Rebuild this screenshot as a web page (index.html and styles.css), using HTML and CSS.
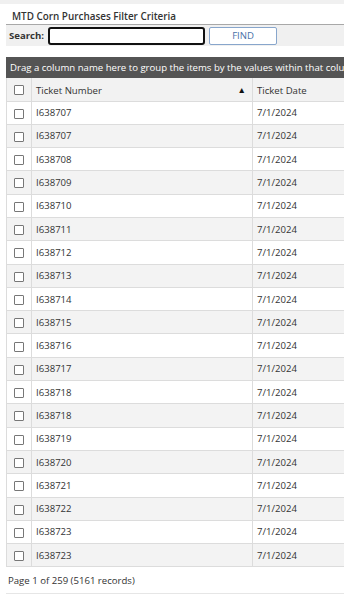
FILE: index.html
```html
<!DOCTYPE html>
<html lang="en">
<head>
  <meta charset="UTF-8" />
  <title>MTD Corn Purchases</title>
  <link rel="stylesheet" href="styles.css">
</head>
<body>
  <div class="topband"></div>

  <div class="panel">
    <div class="panel-title">MTD Corn Purchases Filter Criteria</div>
    <div class="search-bar">
      <label for="search">Search:</label>
      <input id="search" type="text" />
      <button class="find">FIND</button>
    </div>
  </div>

  <div class="grid">
    <div class="group-panel">Drag a column name here to group the items by the values within that column</div>
    <table>
      <thead>
        <tr>
          <th class="chk"><span class="box"></span></th>
          <th class="num">Ticket Number <span class="sort">&#9650;</span></th>
          <th class="date">Ticket Date</th>
        </tr>
      </thead>
      <tbody id="rows"></tbody>
    </table>
    <div class="pager">Page 1 of 259 (5161 records)</div>
  </div>

  <script>
    const tickets = ["I638707","I638707","I638708","I638709","I638710","I638711","I638712","I638713","I638714","I638715",
                     "I638716","I638717","I638718","I638718","I638719","I638720","I638721","I638722","I638723","I638723"];
    const body = document.getElementById("rows");
    tickets.forEach(t => {
      const tr = document.createElement("tr");
      tr.innerHTML = `<td class="chk"><span class="box"></span></td><td>${t}</td><td>7/1/2024</td>`;
      body.appendChild(tr);
    });
  </script>
</body>
</html>
```

FILE: styles.css
```css
* {
  box-sizing: border-box;
}

body {
  margin: 0;
  font-family: "Open Sans", "Liberation Sans", sans-serif;
  font-size: 9.6px;
  color: #333;
  background: #fff;
  width: 344px;
  overflow: hidden;
}

.topband {
  height: 4px;
  background: #f0f0f0;
}

.panel {
  margin: 0 0 0 6px;
}

.panel-title {
  font-weight: 600;
  font-size: 9.9px;
  padding: 5px 0 3px 6px;
  height: 20px;
  color: #333;
}

.search-bar {
  display: flex;
  align-items: center;
  height: 22px;
  background: #f0f0f0;
  border-top: 1px solid #a8a8a8;
  padding-left: 3px;
}

.search-bar label {
  font-weight: 700;
  color: #333;
  margin-right: 4px;
}

.search-bar input {
  width: 157px;
  height: 18px;
  border: 2px solid #111;
  border-radius: 3px;
  background: #fff;
  outline: none;
  padding: 0 3px;
}

.find {
  width: 68px;
  height: 18px;
  margin-left: 4px;
  border: 1px solid #88a6cc;
  border-radius: 2px;
  background: #fff;
  color: #4a72a8;
  font-family: inherit;
  font-size: 9.6px;
}

.grid {
  margin: 11px 0 0 6px;
  width: 520px;
}

.group-panel {
  background: #545454;
  color: #fff;
  height: 21px;
  line-height: 21px;
  padding-left: 4px;
  white-space: nowrap;
  overflow: hidden;
}

table {
  width: 100%;
  border-collapse: collapse;
  table-layout: fixed;
}

th, td {
  height: 23.3px;
  padding: 0 4px;
  text-align: left;
  font-weight: 400;
  border: 1px solid #dcdcdc;
  white-space: nowrap;
}

th {
  height: 23px;
  padding-top: 3px;
  background: #f2f2f2;
  border-top: none;
}

th.chk {
  width: 25px;
}

th.num {
  width: 221px;
}

.sort {
  float: right;
  font-size: 8.5px;
  color: #111;
  margin-right: 2px;
}

td.chk, th.chk {
  text-align: center;
  padding: 0;
}

tbody tr:nth-child(even) td {
  background: #f3f3f3;
}

.box {
  display: inline-block;
  width: 10px;
  height: 10px;
  border: 1px solid #777;
  border-radius: 1px;
  background: #fff;
  vertical-align: middle;
}

.pager {
  padding: 7px 2px 0;
  height: 27px;
  border-bottom: 1px solid #e6e6e6;
}
```
